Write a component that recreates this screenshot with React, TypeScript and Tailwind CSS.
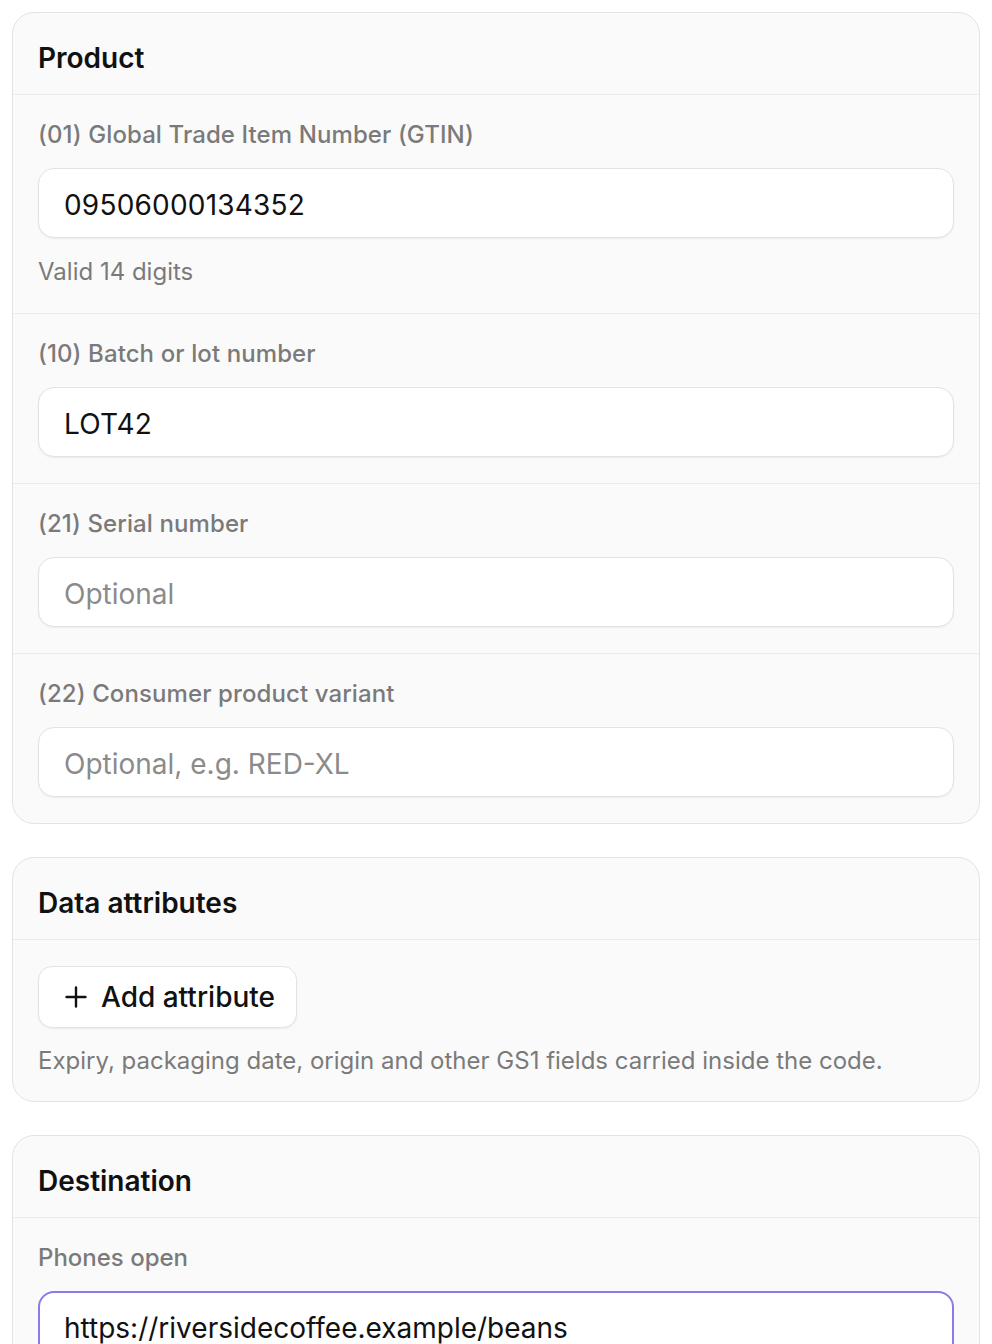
import React from "react";

const font = { fontFamily: "Inter, 'Noto Sans', sans-serif" };

function Field({
  label,
  value,
  placeholder,
  helper,
  first,
}: {
  label: string;
  value?: string;
  placeholder?: string;
  helper?: string;
  first?: boolean;
}) {
  return (
    <div className={`px-[25px] pt-[26px] ${helper ? "pb-[27px]" : "pb-[26px]"} ${first ? "" : "border-t border-[#ebebeb]"}`}>
      <div className="text-[24px] leading-[28px] font-medium text-[#7a7a7a] tracking-[0.1px]">{label}</div>
      <div className="mt-[19px] h-[70px] rounded-[16px] border border-[#e3e3e3] bg-white shadow-[0_1px_2px_rgba(0,0,0,0.06)] flex items-center pl-[25px] pt-[3px]">
        {value ? (
          <span className="text-[28px] text-[#111111] tracking-[0.2px]">{value}</span>
        ) : (
          <span className="text-[28px] text-[#8b8b8b]">{placeholder}</span>
        )}
      </div>
      {helper && (
        <div className="mt-[20px] text-[24px] leading-[28px] text-[#7a7a7a]">{helper}</div>
      )}
    </div>
  );
}

function CardHeader({ title }: { title: string }) {
  return (
    <div className="px-[25px] pt-[31px] pb-[22px] border-b border-[#ebebeb]">
      <div className="text-[28px] leading-[28px] font-semibold text-[#111111]">{title}</div>
    </div>
  );
}

export default function App() {
  return (
    <div className="bg-white px-[12px] pt-[12px] flex flex-col gap-[33px] overflow-hidden h-[1344px]" style={font}>
      <div className="shrink-0 rounded-[22px] border border-[#e3e3e3] bg-[#fafafa] overflow-hidden">
        <CardHeader title="Product" />
        <Field first label="(01) Global Trade Item Number (GTIN)" value="09506000134352" helper="Valid 14 digits" />
        <Field label="(10) Batch or lot number" value="LOT42" />
        <Field label="(21) Serial number" placeholder="Optional" />
        <Field label="(22) Consumer product variant" placeholder="Optional, e.g. RED-XL" />
      </div>

      <div className="shrink-0 rounded-[22px] border border-[#e3e3e3] bg-[#fafafa] overflow-hidden">
        <CardHeader title="Data attributes" />
        <div className="px-[25px] pt-[26px] pb-[26px]">
          <div className="inline-flex items-center h-[62px] rounded-[14px] border border-[#e3e3e3] bg-white shadow-[0_1px_2px_rgba(0,0,0,0.06)] pl-[26px] pr-[21px] gap-[14px]">
            <svg width="22" height="22" viewBox="0 0 22 22" fill="none" stroke="#111111" strokeWidth="2.4" strokeLinecap="round">
              <path d="M11 1.5v19M1.5 11h19" />
            </svg>
            <span className="text-[28px] font-medium text-[#111111]">Add attribute</span>
          </div>
          <div className="mt-[19px] text-[24px] leading-[28px] text-[#7a7a7a]">
            Expiry, packaging date, origin and other GS1 fields carried inside the code.
          </div>
        </div>
      </div>

      <div className="shrink-0 rounded-t-[22px] border border-[#e3e3e3] bg-[#fafafa]">
        <CardHeader title="Destination" />
        <div className="px-[25px] pt-[26px] pb-[26px]">
          <div className="text-[24px] leading-[28px] font-medium text-[#7a7a7a]">Phones open</div>
          <div className="mt-[19px] h-[70px] rounded-[16px] border-2 border-[#8a7be6] bg-white flex items-center pl-[24px] pt-[3px]">
            <span className="text-[28px] text-[#111111]">https://riversidecoffee.example/beans</span>
          </div>
        </div>
      </div>
    </div>
  );
}
